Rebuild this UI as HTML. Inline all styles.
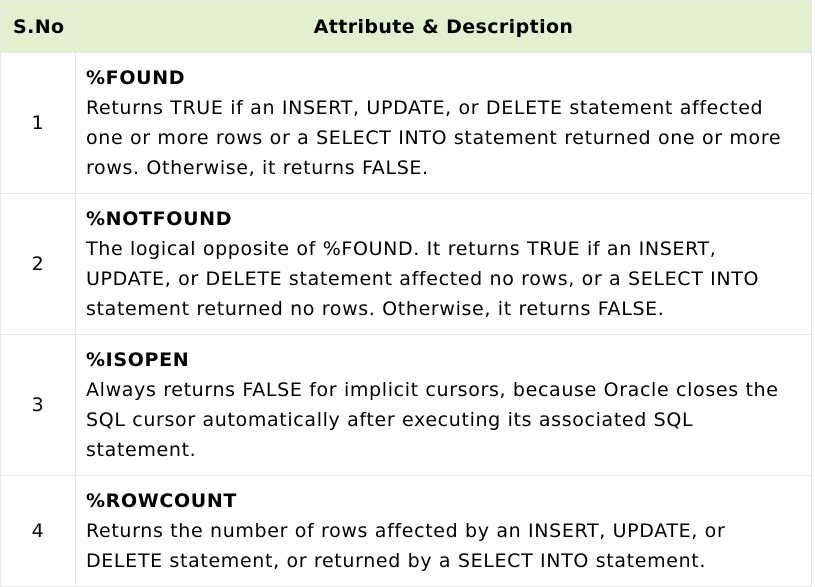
<!DOCTYPE html>
<html><head><style>
body{margin:0;background:#fff;font-family:"DejaVu Sans","Liberation Sans",sans-serif;color:#000;}
table{border-collapse:collapse;position:absolute;left:0;top:0;width:812px;table-layout:fixed;}
td,th{border:1px solid #e6e6e6;font-size:19px;letter-spacing:0.65px;line-height:30px;white-space:nowrap;overflow:hidden;}
th{background:#e2f0d0;height:51px;font-weight:bold;padding:0;letter-spacing:0.4px;}
td.n{text-align:center;}
td.d{padding:0 0 0 10px;height:140px;}
tr.last td.d{height:110px;}
</style></head><body>
<table>
<colgroup><col style="width:75px"><col></colgroup>
<tr><th style="text-align:left;padding-left:12px;">S.No</th><th>Attribute &amp; Description</th></tr>
<tr><td class="n">1</td><td class="d"><b>%FOUND</b><br>Returns TRUE if an INSERT, UPDATE, or DELETE statement affected<br>one or more rows or a SELECT INTO statement returned one or more<br>rows. Otherwise, it returns FALSE.</td></tr>
<tr><td class="n">2</td><td class="d"><b>%NOTFOUND</b><br>The logical opposite of %FOUND. It returns TRUE if an INSERT,<br>UPDATE, or DELETE statement affected no rows, or a SELECT INTO<br>statement returned no rows. Otherwise, it returns FALSE.</td></tr>
<tr><td class="n">3</td><td class="d"><b>%ISOPEN</b><br>Always returns FALSE for implicit cursors, because Oracle closes the<br>SQL cursor automatically after executing its associated SQL<br>statement.</td></tr>
<tr class="last"><td class="n">4</td><td class="d"><b>%ROWCOUNT</b><br>Returns the number of rows affected by an INSERT, UPDATE, or<br>DELETE statement, or returned by a SELECT INTO statement.</td></tr>
</table>
</body></html>
